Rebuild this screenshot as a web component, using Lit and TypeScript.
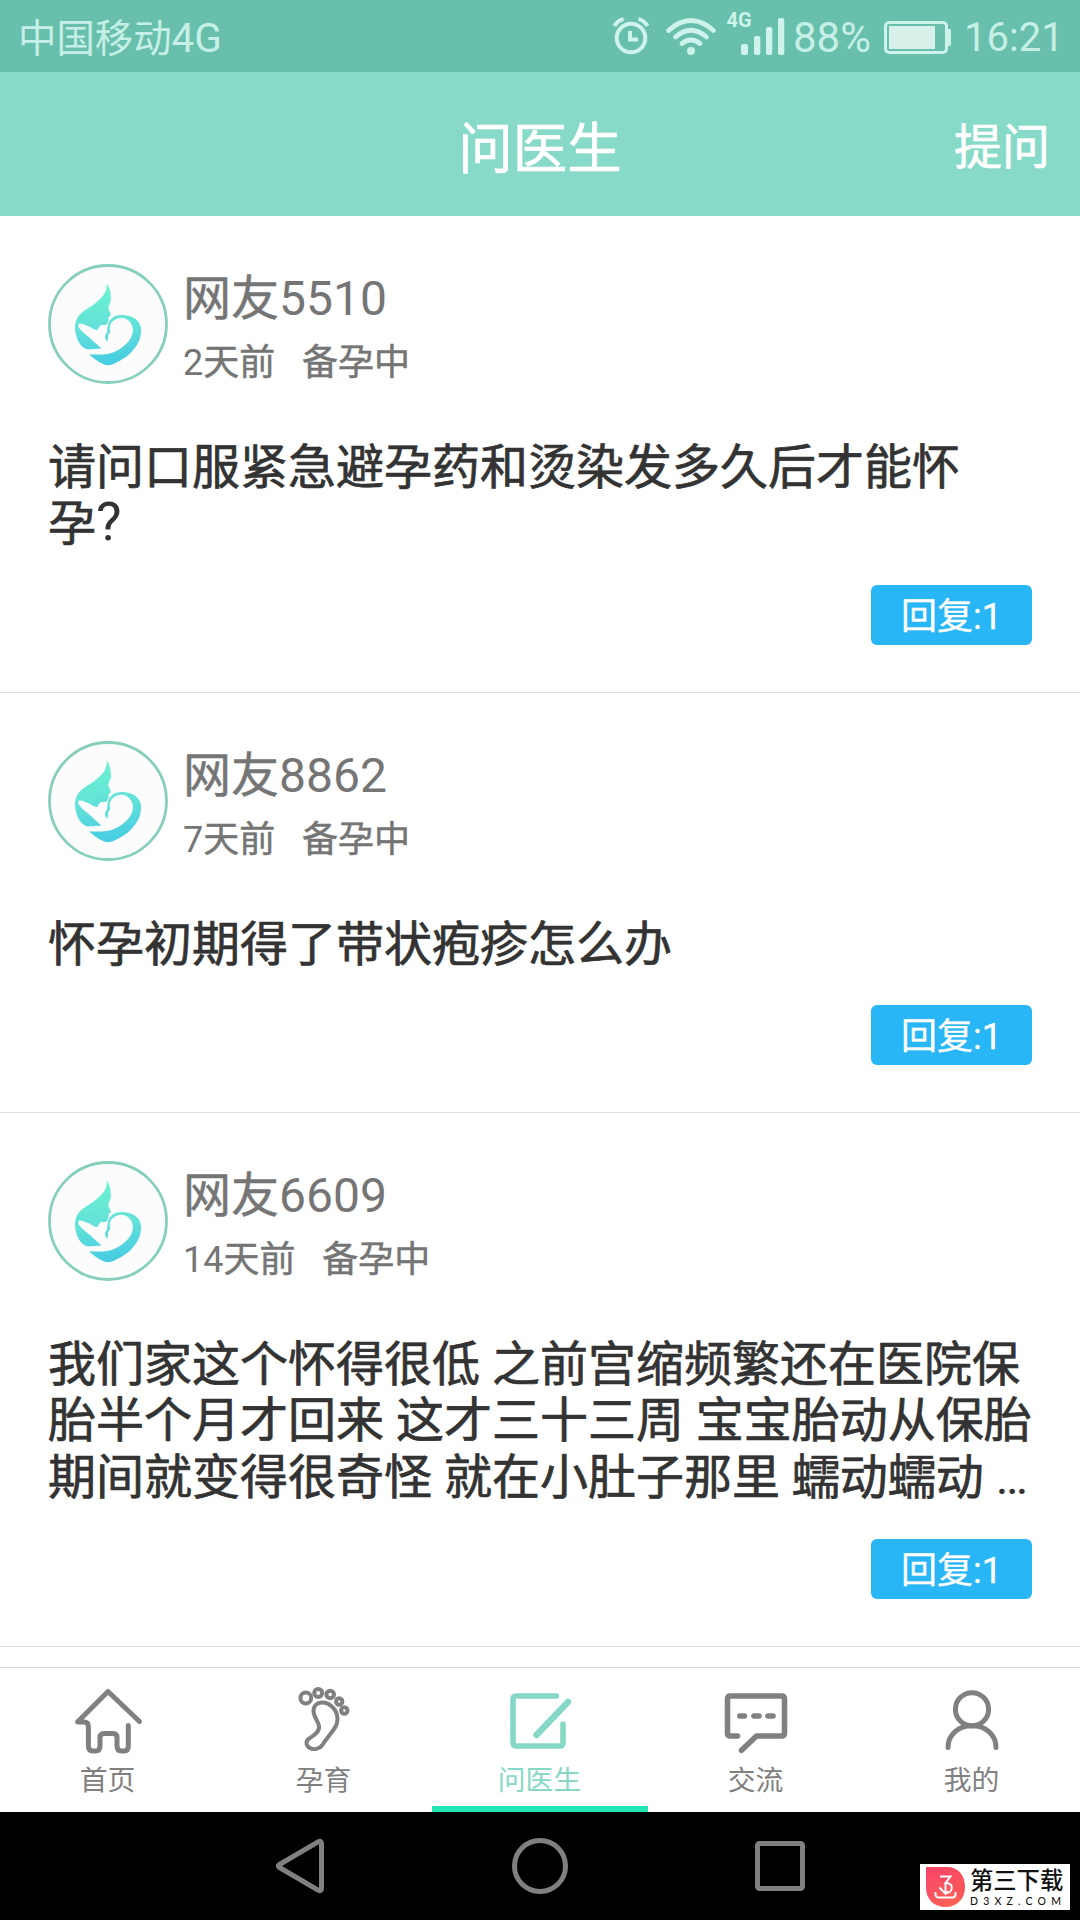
import { LitElement, html, css, svg } from "lit";
import { customElement, property } from "lit/decorators.js";

interface Question {
  user: string;
  meta: string;
  lines: string[];
  replies: number;
}

const QUESTIONS: Question[] = [
  { user: "网友5510", meta: "2天前   备孕中", lines: ["请问口服紧急避孕药和烫染发多久后才能怀", "孕?"], replies: 1 },
  { user: "网友8862", meta: "7天前   备孕中", lines: ["怀孕初期得了带状疱疹怎么办"], replies: 1 },
  {
    user: "网友6609",
    meta: "14天前   备孕中",
    lines: [
      "我们家这个怀得很低 之前宫缩频繁还在医院保",
      "胎半个月才回来 这才三十三周 宝宝胎动从保胎",
      "期间就变得很奇怪 就在小肚子那里 蠕动蠕动 …",
    ],
    replies: 1,
  },
];

/* Digits and Latin marks are set apart from the slightly heavier Chinese text. */
const mixed = (text: string) =>
  text.split(/(\d+|\?|…)/).filter(Boolean).map((part) => {
    if (part === "?") return html`<span class="num mark">${part}</span>`;
    return /^[\d…]/.test(part) ? html`<span class="num">${part}</span>` : part;
  });

const TABS = [
  {
    label: "首页",
    icon: svg`<path d="M65.500 31.500L34 1.500L3.500 32H10Q14.400 32 14.400 36.500V56Q14.400 61 19 61H21.500Q26 61 26 56V47.500Q26 43.500 30 43.500H39Q43 43.500 43 47.500V56Q43 61 47.500 61H50Q54.300 61 54.300 56V35.500" transform="translate(4 2)"/>`,
  },
  {
    label: "孕育",
    icon: svg`<g stroke-width="4"><circle cx="19.800" cy="10" r="5.400"/><circle cx="32.200" cy="4.900" r="4"/><circle cx="44.200" cy="6.500" r="3.800"/><circle cx="53.200" cy="13.500" r="3.200"/><circle cx="58.300" cy="22.500" r="3.200"/><path d="M36 14.500C44 14.500 51.500 22 51.500 31C51.500 40 44 45 36 57.500C33 61.500 28 61.500 25 60.500C20 58.500 19.500 54 22 51.500C24.500 49 34 45.500 33 38C32 32.500 27.500 29 27.500 23C27.500 18 31 14.500 36 14.500Z"/></g>`,
  },
  {
    label: "问医生",
    icon: svg`<g stroke-width="5.600"><path d="M54.500 8H14.500Q11 8 11 11.500V54.500Q11 58 14.500 58H57.500Q61 58 61 54.500V36"/><path d="M66 14L34.500 47" stroke-width="6.400"/></g>`,
  },
  {
    label: "交流",
    icon: svg`<g stroke-width="5.600"><path d="M19.500 48H12.500Q9.500 48 9.500 45V11Q9.500 8 12.500 8H63.500Q66.500 8 66.500 11V45Q66.500 48 63.500 48H38.500L23.500 62.300"/><path d="M21.800 28H26.500M36 28H41M50 28H55"/></g>`,
  },
  {
    label: "我的",
    icon: svg`<circle cx="38" cy="21.300" r="16.600"/><path d="M14 59.500C14 46 25 37.800 38 37.800S62 46 62 59.500"/>`,
  },
];

@customElement("status-bar")
class StatusBar extends LitElement {
  static styles = css`
    :host { display: flex; height: 72px; background: #68bfac; color: #c6efe6; font: 400 38.400px/72px Roboto, "Noto Sans CJK SC", sans-serif; white-space: nowrap; }
    .carrier { padding: 0 0 0 18px; flex: 1; line-height: 78px; }
    .gen { font-size: 40.500px; line-height: 0; }
    .icons { width: 179px; height: 72px; flex: none; }
    .net { font: 700 20px Roboto, sans-serif; }
    .percent { width: 88px; padding-left: 1px; font-size: 42px; line-height: 76px; }
    .battery { width: 72px; height: 72px; flex: none; }
    .time { width: 119px; padding-left: 11px; box-sizing: border-box; font-size: 40px; line-height: 76px; margin-right: 8px; }
  `;
  render() {
    return html`
      <span class="carrier">中国移动<span class="gen">4G</span></span>
      <svg class="icons" viewBox="613 0 179 72" fill="none" stroke="#cdf3eb" stroke-linecap="round">
        <circle cx="631" cy="38" r="14.300" stroke-width="4" />
        <path d="M630 31V39.500H638" stroke-width="4" stroke-linecap="butt" />
        <path d="M614.500 26Q617.500 20.500 623.500 18.800M647.500 26Q644.500 20.500 638.500 18.800" stroke-width="4" stroke-linecap="butt" />
        <path d="M668.500 30.500Q691 10.500 713.500 30.500M675.500 37Q691 23.500 706.500 37M682 43.500Q691 36.500 700 43.500" stroke-width="4.800" />
        <circle cx="691" cy="51" r="4" fill="#cdf3eb" stroke="none" />
        <g fill="#cdf3eb" stroke="none">
          <text class="net" x="726.500" y="27">4G</text>
          <rect x="741" y="44" width="7" height="11" rx="2" />
          <rect x="754" y="36" width="6.300" height="19" rx="2" />
          <rect x="766" y="27" width="6.300" height="28" rx="2" />
          <rect x="778" y="18" width="6.300" height="37" rx="2" />
        </g>
      </svg>
      <span class="percent">88%</span>
      <svg class="battery" viewBox="881 0 72 72">
        <rect x="885.500" y="22.500" width="61" height="30" rx="3.500" fill="none" stroke="#cdf3eb" stroke-width="3" />
        <rect x="889" y="26" width="46" height="23" fill="#d8f0ea" />
        <path d="M948 29H949.500Q951 29 951 31V44Q951 46 949.500 46H948Z" fill="#cdf3eb" />
      </svg>
      <span class="time">16:21</span>
    `;
  }
}

@customElement("mother-avatar")
class MotherAvatar extends LitElement {
  static styles = css`
    :host { display: block; width: 120px; height: 120px; }
    .art { display: block; }
  `;
  render() {
    return html`
      <svg class="art" width="120" height="120" viewBox="0 0 120 120">
        <defs>
          <linearGradient id="g" gradientUnits="userSpaceOnUse" x1="55" y1="20" x2="64" y2="102">
            <stop offset="0" stop-color="#6cf3d0" /><stop offset="0.500" stop-color="#62e2d8" /><stop offset="1" stop-color="#45cbe3" />
          </linearGradient>
        </defs>
        <circle cx="60" cy="60" r="58.500" fill="#fcfcfc" stroke="#86cfbd" stroke-width="2.800" />
        <g fill="url(#g)">
          <path d="M58.700 19.300C62 24 63.200 30 62.800 37C61.500 40 60 43 60.500 45L62.800 50.500C63 52 61.500 52.300 60.500 53L60.800 56C59.500 58 59.800 60 58 60.800C55.500 61.300 54 60.500 52 61.700C50.500 63 50.500 66 48.500 66C46 66 43 63 40 62C36 60.500 34 59 31.500 59.500C30 60 30 62 30.800 63.500C34 68.500 42 73.500 45 77L53.500 84.500C48 84.500 43 85.500 38.700 85.300C35 84 32.500 81 31 78.500C28 73 26.500 66 27.200 61C29 48 39 46 47 39.500C55 33 59.500 28 58.700 19.300Z" />
          <path d="M59.300 77.700C56.500 75 56.500 71 59 69C59.500 66 59 64 60 60.500C62 54 67 51 74 51C84 51 92 56 93 64.500C93.500 74 90 81 83.500 88C78 94 69 98.500 64 100.500C60.500 101.700 58 101.300 54 99.500C49 97 44.500 93.500 41 90.200C47 90.500 53 90.800 58.700 90C67 88.800 75 84 80.500 77.500C85 72 86.500 65 83 59.500C80.500 55 75.500 53 71 54C66 55.200 62.500 58.500 61.800 62.500C61.300 65 63 67 61.500 69.500C59 71 61 73 59.800 74.500Z" />
        </g>
      </svg>
    `;
  }
}

@customElement("question-card")
class QuestionCard extends LitElement {
  @property({ attribute: false }) question!: Question;
  static styles = css`
    :host { display: flex; flex-direction: column; box-sizing: border-box; padding: 48px 48px 47px; border-bottom: 1px solid #dedede; background: #fff; }
    .head { display: flex; gap: 15px; height: 120px; }
    .who { display: flex; flex-direction: column; color: #757575; white-space: pre; -webkit-text-stroke: 0.500px #757575; }
    .num { -webkit-text-stroke-width: 0; }
    .mark { font-size: 54px; line-height: 0; }
    .name { font-size: 48px; line-height: 56px; padding-top: 7px; }
    .meta { font-size: 36px; line-height: 42px; padding-top: 15px; }
    .body { margin-top: 56px; color: #333; font-size: 48px; line-height: 56.250px; white-space: pre; -webkit-text-stroke: 0.700px #333; }
    .foot { display: flex; justify-content: flex-end; margin-top: auto; }
    .reply { height: 60.500px; padding: 0 30px; border-radius: 6px; background: #29b6f6; color: #fff; font-size: 36px; line-height: 65px; -webkit-text-stroke: 0.300px #fff; }
  `;
  render() {
    const q = this.question;
    return html`
      <div class="head">
        <mother-avatar></mother-avatar>
        <div class="who"><span class="name">${mixed(q.user)}</span><span class="meta">${mixed(q.meta)}</span></div>
      </div>
      <div class="body">${q.lines.map((line) => html`<div>${mixed(line)}</div>`)}</div>
      <div class="foot"><span class="reply">回复:${q.replies}</span></div>
    `;
  }
}

@customElement("tab-bar")
class TabBar extends LitElement {
  static styles = css`
    :host { display: grid; grid-template-columns: repeat(5, 1fr); height: 145px; box-sizing: border-box; border-top: 1px solid #d6d6d6; background: #fff; }
    .tab { display: flex; flex-direction: column; align-items: center; box-sizing: border-box; padding: 20px 1px 0 0; color: #808080; border-bottom: 6px solid transparent; }
    .on { color: #86d8c6; border-bottom-color: #23e5b4; }
    .icon { display: block; width: 76px; height: 70px; fill: none; stroke: currentColor; stroke-width: 5; stroke-linecap: round; stroke-linejoin: round; overflow: visible; }
    .label { font-size: 27.800px; line-height: 36px; margin-top: 5px; }
  `;
  render() {
    return TABS.map(
      (t, i) => html`<div class="tab ${i === 2 ? "on" : ""}">
        <svg class="icon" viewBox="0 0 76 70">${t.icon}</svg>
        <span class="label">${t.label}</span>
      </div>`
    );
  }
}

@customElement("site-badge")
class SiteBadge extends LitElement {
  static styles = css`
    :host { display: flex; box-sizing: border-box; width: 150px; height: 46px; padding: 3px 0 0 6px; gap: 5px; background: #fff; color: #111; }
    .mark { flex: none; }
    .words { display: flex; flex-direction: column; white-space: nowrap; }
    .cn { font-size: 23.300px; line-height: 29px; font-weight: 500; }
    .en { font: 500 10.500px/12px Lato, sans-serif; letter-spacing: 5.200px; margin-top: -1px; }
  `;
  render() {
    return html`
      <svg class="mark" width="39" height="40" viewBox="0 0 39 40">
        <defs><linearGradient id="r" x1="0" y1="0" x2="1" y2="1"><stop offset="0" stop-color="#f8436e" /><stop offset="1" stop-color="#ff6a50" /></linearGradient></defs>
        <path d="M0 0H21C32 0 39 8 39 20S31 40 19.500 40S0 32 0 21Z" fill="url(#r)" />
        <path d="M0 0L35 33C43 20 37 0 21 0Z" fill="#f2405f" opacity="0.300" />
        <path d="M14 9.500H24.500L19.500 16C28 16 27.500 25 20.500 26M19.500 17V26.500M13.500 20.500L19.500 27L22 24.500M9.500 25V27Q9.500 30.500 13 30.500H26.500Q29.500 30.500 29.500 27V25" fill="none" stroke="#fff" stroke-width="1.900" />
      </svg>
      <div class="words"><span class="cn">第三下载</span><span class="en">D3XZ.COM</span></div>
    `;
  }
}

@customElement("app-root")
class AppRoot extends LitElement {
  static styles = css`
    :host { display: flex; flex-direction: column; position: relative; width: 1080px; height: 1920px; overflow: hidden; background: #fff; font-family: Roboto, "Noto Sans CJK SC", sans-serif; }
    .header { display: grid; grid-template-columns: 1fr auto 1fr; align-items: center; height: 144px; flex: none; background: #86dac7; color: #fff; -webkit-text-stroke: 0.700px #fff; }
    .title { grid-column: 2; font-size: 54.500px; line-height: 64px; padding-top: 9px; }
    .ask { justify-self: end; padding: 7px 30px 0 0; font-size: 48px; line-height: 64px; }
    .list { flex: 1; display: grid; grid-template-columns: minmax(0, 1fr); grid-template-rows: 477px 420px 534px; align-content: start; overflow: hidden; }
    .nav { display: block; flex: none; width: 1080px; height: 108px; background: #000; fill: none; stroke: #808080; stroke-width: 5; stroke-linejoin: round; }
    .badge { position: absolute; left: 920px; top: 1864px; }
  `;
  render() {
    return html`
      <status-bar></status-bar>
      <div class="header"><span class="title">问医生</span><span class="ask">提问</span></div>
      <div class="list">${QUESTIONS.map((q) => html`<question-card .question=${q}></question-card>`)}</div>
      <tab-bar></tab-bar>
      <svg class="nav" viewBox="0 0 1080 108">
        <path d="M279.500 52.500Q277 54 279.500 55.500L318.500 78.300Q321.500 79.500 321.500 76.500V31.500Q321.500 28.500 318.500 29.700Z" />
        <circle cx="540" cy="54" r="25.500" />
        <rect x="757.500" y="31.500" width="45" height="45" rx="2" />
      </svg>
      <site-badge class="badge"></site-badge>
    `;
  }
}
